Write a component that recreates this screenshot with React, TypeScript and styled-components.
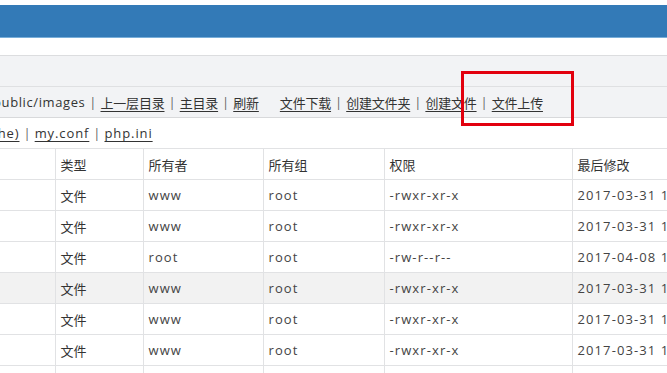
import React from "react";
import styled, { createGlobalStyle } from "styled-components";

const Global = createGlobalStyle`
  html, body {
    margin: 0;
    padding: 0;
    background: #fff;
    overflow: hidden;
  }
  body {
    font-family: "Open Sans", "Noto Sans CJK SC", sans-serif;
    font-size: 13px;
    color: #333;
  }
`;

const Page = styled.div`
  position: relative;
  width: 667px;
  height: 373px;
  overflow: hidden;
  padding-top: 5px;
  box-sizing: border-box;
`;

const Header = styled.div`
  height: 32px;
  background: #337ab7;
  border-bottom: 1px solid #78aed9;
`;

const Spacer = styled.div`
  height: 17px;
`;

const Band = styled.div`
  height: 30px;
  background: #f2f3f5;
  border-bottom: 1px solid #dfe0e2;
`;

const Toolbar = styled(Band)`
  border-top: 1px solid #dcdddf;
`;

const LinkBar = styled(Band)`
  display: flex;
  align-items: center;
  white-space: nowrap;
  border-bottom-color: #d8d9db;
`;

const FileLine = styled.div`
  height: 30px;
  display: flex;
  align-items: center;
  white-space: nowrap;
`;

const Path = styled.span<{ $shift: number }>`
  margin-left: ${(p) => p.$shift}px;
  letter-spacing: 0.6px;
`;

const Link = styled.a<{ $latin?: boolean }>`
  color: #333;
  text-decoration: underline;
  text-underline-offset: 3px;
  letter-spacing: ${(p) => (p.$latin ? "0.9px" : "-0.2px")};
  cursor: pointer;
`;

const Sep = styled.span`
  color: #666;
  padding: 0 4px;
`;

const Gap = styled.span`
  display: inline-block;
  width: 21px;
`;

const Table = styled.table`
  border-collapse: collapse;
  table-layout: fixed;
  width: 780px;
`;

const Th = styled.th`
  height: 30px;
  padding: 0 5px;
  text-align: left;
  font-weight: normal;
  color: #333;
  border: 1px solid #e1e2e4;
  &:first-child {
    border-left: none;
  }
`;

const Row = styled.tr<{ $hover?: boolean }>`
  background: ${(p) => (p.$hover ? "#f2f2f2" : "#fff")};
`;

const Td = styled.td<{ $latin?: boolean }>`
  height: 30px;
  padding: 0 5px;
  white-space: nowrap;
  overflow: hidden;
  color: ${(p) => (p.$latin ? "#444" : "#333")};
  letter-spacing: ${(p) => (p.$latin ? "1.1px" : "0")};
  border: 1px solid #e1e2e4;
  &:first-child {
    border-left: none;
  }
`;

const Mark = styled.div`
  position: absolute;
  left: 461px;
  top: 71px;
  width: 113px;
  height: 55px;
  border: 3px solid #e2000e;
  box-sizing: border-box;
  pointer-events: none;
`;

const widths = [55, 88, 120, 121, 188, 208];

const rows = [
  { owner: "www", perm: "-rwxr-xr-x", time: "2017-03-31 15:42:10" },
  { owner: "www", perm: "-rwxr-xr-x", time: "2017-03-31 15:42:10" },
  { owner: "root", perm: "-rw-r--r--", time: "2017-04-08 11:20:33" },
  { owner: "www", perm: "-rwxr-xr-x", time: "2017-03-31 15:42:10", hover: true },
  { owner: "www", perm: "-rwxr-xr-x", time: "2017-03-31 15:42:10" },
  { owner: "www", perm: "-rwxr-xr-x", time: "2017-03-31 15:42:10" },
  { owner: "www", perm: "-rwxr-xr-x", time: "2017-03-31 15:42:10" },
];

function App() {
  return (
    <Page>
      <Global />
      <Header />
      <Spacer />
      <Toolbar />
      <LinkBar>
        <Path $shift={-7}>public/images</Path>
        <Sep>|</Sep>
        <Link>上一层目录</Link>
        <Sep>|</Sep>
        <Link>主目录</Link>
        <Sep>|</Sep>
        <Link>刷新</Link>
        <Gap />
        <Link>文件下载</Link>
        <Sep>|</Sep>
        <Link>创建文件夹</Link>
        <Sep>|</Sep>
        <Link>创建文件</Link>
        <Sep>|</Sep>
        <Link>文件上传</Link>
      </LinkBar>
      <FileLine>
        <Path $shift={-29}>
          <Link $latin>.cache)</Link>
        </Path>
        <Sep>|</Sep>
        <Link $latin>my.conf</Link>
        <Sep>|</Sep>
        <Link $latin>php.ini</Link>
      </FileLine>
      <Table>
        <colgroup>
          {widths.map((w, i) => (
            <col key={i} style={{ width: w }} />
          ))}
        </colgroup>
        <thead>
          <tr>
            <Th></Th>
            <Th>类型</Th>
            <Th>所有者</Th>
            <Th>所有组</Th>
            <Th>权限</Th>
            <Th>最后修改</Th>
          </tr>
        </thead>
        <tbody>
          {rows.map((r, i) => (
            <Row key={i} $hover={r.hover}>
              <Td></Td>
              <Td>文件</Td>
              <Td $latin>{r.owner}</Td>
              <Td $latin>root</Td>
              <Td $latin>{r.perm}</Td>
              <Td $latin>{r.time}</Td>
            </Row>
          ))}
        </tbody>
      </Table>
      <Mark />
    </Page>
  );
}

export default App;
